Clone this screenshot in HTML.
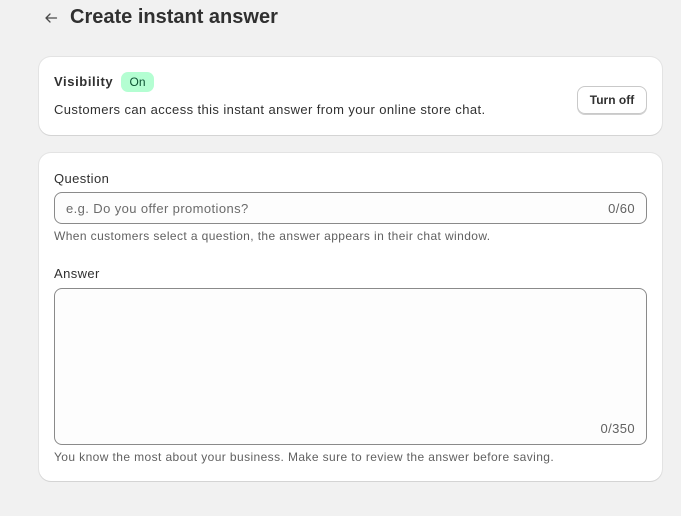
<!DOCTYPE html>
<html><head><meta charset="utf-8"><style>
*{box-sizing:border-box;margin:0;padding:0}
body{width:681px;height:516px;background:#f1f1f1;font-family:"Liberation Sans",sans-serif;color:#303030;position:relative;overflow:hidden}
.abs{position:absolute}
.card{position:absolute;left:39px;width:623px;background:#fff;border-radius:12px;box-shadow:0 1px 0 #d4d4d4,0 0 0 1px #e3e3e3}
.t13{font-size:13px;letter-spacing:0.4px}
.s12{font-size:12px;letter-spacing:0.4px}
.input{position:absolute;border:1px solid #8a8a8a;border-radius:8px;background:#fdfdfd}
</style></head><body>
<svg class="abs" style="left:44px;top:11px" width="14" height="14" viewBox="0 0 14 14"><path d="M12.5 7H2M6 3L2 7l4 4" stroke="#4a4a4a" stroke-width="1.3" fill="none" stroke-linecap="round" stroke-linejoin="round"/></svg>
<div class="abs" style="left:70px;top:6px;font-size:20px;font-weight:bold;color:#303030">Create instant answer</div>

<div class="card" style="top:57px;height:78px">
  <div class="abs t13" style="left:15px;top:17px;font-weight:bold;letter-spacing:0.6px">Visibility</div>
  <div class="abs" style="left:82px;top:15px;width:33px;height:20px;border-radius:7px;background:#b4fed2;color:#0c5132;font-size:12px;text-align:center;line-height:20px">On</div>
  <div class="abs t13" style="left:15px;top:45px">Customers can access this instant answer from your online store chat.</div>
  <div class="abs" style="left:538px;top:29px;width:70px;height:28px;border:1px solid #c9c9c9;border-radius:8px;box-shadow:0 1px 0 #d0d0d0;font-size:12px;font-weight:bold;text-align:center;line-height:26px">Turn off</div>
</div>

<div class="card" style="top:153px;height:328px">
  <div class="abs t13" style="left:15px;top:18px">Question</div>
  <div class="input" style="left:15px;top:39px;width:593px;height:32px">
    <div class="abs t13" style="left:11px;top:8px;color:#6b6b6b">e.g. Do you offer promotions?</div>
    <div class="abs t13" style="right:11px;top:8px;color:#616161">0/60</div>
  </div>
  <div class="abs s12" style="left:15px;top:76px;color:#616161">When customers select a question, the answer appears in their chat window.</div>
  <div class="abs t13" style="left:15px;top:113px">Answer</div>
  <div class="input" style="left:15px;top:135px;width:593px;height:157px">
    <div class="abs t13" style="right:11px;top:132px;color:#616161">0/350</div>
  </div>
  <div class="abs s12" style="left:15px;top:297px;color:#616161">You know the most about your business. Make sure to review the answer before saving.</div>
</div>
</body></html>
